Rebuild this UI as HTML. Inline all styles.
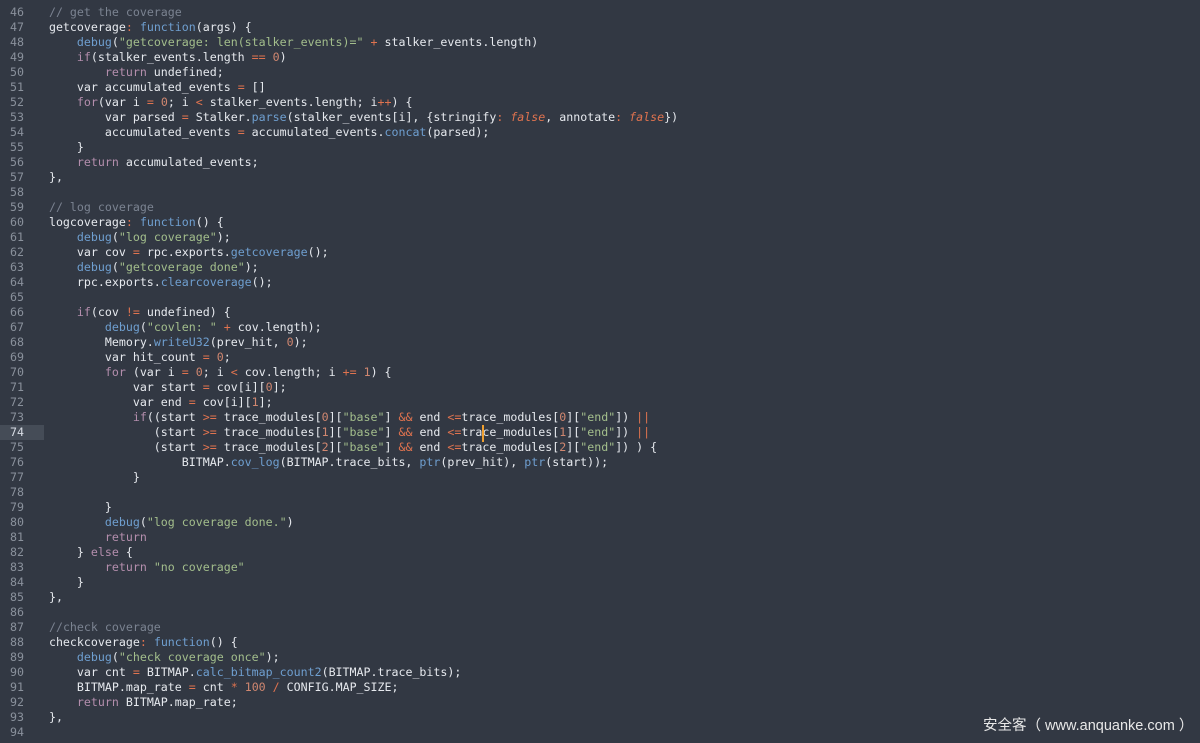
<!DOCTYPE html>
<html><head><meta charset="utf-8"><style>
body{margin:0;width:1200px;height:743px;background:#323843;overflow:hidden;position:relative;font-family:"DejaVu Sans Mono",monospace;font-size:11.62px;}
#g{position:absolute;left:0;top:5px;width:44px;}
#g div{height:15px;line-height:15px;color:#8a919c;padding-left:10px;}
#g div.h{background:#454c57;color:#d8dde5;}
#c{position:absolute;left:21px;top:5px;margin:0;font:inherit;line-height:15px;color:#e6e9ee;white-space:pre;}
.cm{color:#7b8391}.k{color:#b48ead}.f{color:#6f9fd0}.s{color:#a3be8c}.n{color:#d08770}.o{color:#e0734f}.i{color:#e0734f;font-style:italic}
#w{position:absolute;left:983px;top:714px;color:#e8e8e8;font:14.5px "Liberation Sans","Noto Sans CJK SC",sans-serif;white-space:pre;}
</style></head><body>
<div id="g"><div>46</div><div>47</div><div>48</div><div>49</div><div>50</div><div>51</div><div>52</div><div>53</div><div>54</div><div>55</div><div>56</div><div>57</div><div>58</div><div>59</div><div>60</div><div>61</div><div>62</div><div>63</div><div>64</div><div>65</div><div>66</div><div>67</div><div>68</div><div>69</div><div>70</div><div>71</div><div>72</div><div>73</div><div class="h">74</div><div>75</div><div>76</div><div>77</div><div>78</div><div>79</div><div>80</div><div>81</div><div>82</div><div>83</div><div>84</div><div>85</div><div>86</div><div>87</div><div>88</div><div>89</div><div>90</div><div>91</div><div>92</div><div>93</div><div>94</div></div>
<pre id="c">    <span class="cm">// get the coverage</span>
    getcoverage<span class="o">:</span> <span class="f">function</span>(args) {
        <span class="f">debug</span>(<span class="s">"getcoverage: len(stalker_events)="</span> <span class="o">+</span> stalker_events.length)
        <span class="k">if</span>(stalker_events.length <span class="o">==</span> <span class="n">0</span>)
            <span class="k">return</span> undefined;
        var accumulated_events <span class="o">=</span> []
        <span class="k">for</span>(var i <span class="o">=</span> <span class="n">0</span>; i <span class="o">&lt;</span> stalker_events.length; i<span class="o">++</span>) {
            var parsed <span class="o">=</span> Stalker.<span class="f">parse</span>(stalker_events[i], {stringify<span class="o">:</span> <span class="i">false</span>, annotate<span class="o">:</span> <span class="i">false</span>})
            accumulated_events <span class="o">=</span> accumulated_events.<span class="f">concat</span>(parsed);
        }
        <span class="k">return</span> accumulated_events;
    },

    <span class="cm">// log coverage</span>
    logcoverage<span class="o">:</span> <span class="f">function</span>() {
        <span class="f">debug</span>(<span class="s">"log coverage"</span>);
        var cov <span class="o">=</span> rpc.exports.<span class="f">getcoverage</span>();
        <span class="f">debug</span>(<span class="s">"getcoverage done"</span>);
        rpc.exports.<span class="f">clearcoverage</span>();

        <span class="k">if</span>(cov <span class="o">!=</span> undefined) {
            <span class="f">debug</span>(<span class="s">"covlen: "</span> <span class="o">+</span> cov.length);
            Memory.<span class="f">writeU32</span>(prev_hit, <span class="n">0</span>);
            var hit_count <span class="o">=</span> <span class="n">0</span>;
            <span class="k">for</span> (var i <span class="o">=</span> <span class="n">0</span>; i <span class="o">&lt;</span> cov.length; i <span class="o">+=</span> <span class="n">1</span>) {
                var start <span class="o">=</span> cov[i][<span class="n">0</span>];
                var end <span class="o">=</span> cov[i][<span class="n">1</span>];
                <span class="k">if</span>((start <span class="o">&gt;=</span> trace_modules[<span class="n">0</span>][<span class="s">"base"</span>] <span class="o">&amp;&amp;</span> end <span class="o">&lt;=</span>trace_modules[<span class="n">0</span>][<span class="s">"end"</span>]) <span class="o">||</span>
                   (start <span class="o">&gt;=</span> trace_modules[<span class="n">1</span>][<span class="s">"base"</span>] <span class="o">&amp;&amp;</span> end <span class="o">&lt;=</span>trace_modules[<span class="n">1</span>][<span class="s">"end"</span>]) <span class="o">||</span>
                   (start <span class="o">&gt;=</span> trace_modules[<span class="n">2</span>][<span class="s">"base"</span>] <span class="o">&amp;&amp;</span> end <span class="o">&lt;=</span>trace_modules[<span class="n">2</span>][<span class="s">"end"</span>]) ) {
                       BITMAP.<span class="f">cov_log</span>(BITMAP.trace_bits, <span class="f">ptr</span>(prev_hit), <span class="f">ptr</span>(start));
                }

            }
            <span class="f">debug</span>(<span class="s">"log coverage done."</span>)
            <span class="k">return</span>
        } <span class="k">else</span> {
            <span class="k">return</span> <span class="s">"no coverage"</span>
        }
    },

    <span class="cm">//check coverage</span>
    checkcoverage<span class="o">:</span> <span class="f">function</span>() {
        <span class="f">debug</span>(<span class="s">"check coverage once"</span>);
        var cnt <span class="o">=</span> BITMAP.<span class="f">calc_bitmap_count2</span>(BITMAP.trace_bits);
        BITMAP.map_rate <span class="o">=</span> cnt <span class="o">*</span> <span class="n">100</span> <span class="o">/</span> CONFIG.MAP_SIZE;
        <span class="k">return</span> BITMAP.map_rate;
    },
</pre>
<div style="position:absolute;left:482px;top:425px;width:2px;height:17px;background:#f0a030"></div>
<div id="w">安全客（ www.anquanke.com ）</div>
</body></html>
